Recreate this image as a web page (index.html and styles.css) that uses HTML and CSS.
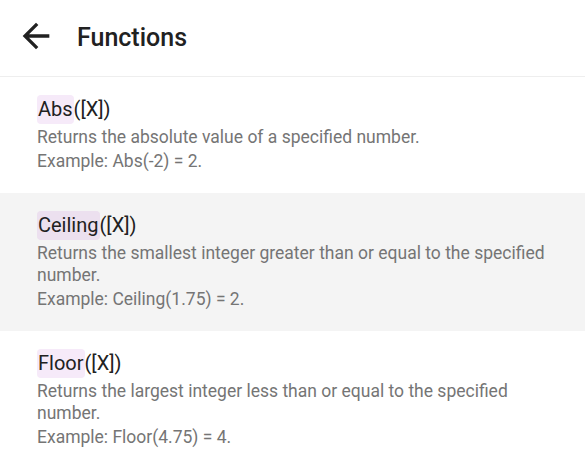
FILE: index.html
```html
<!DOCTYPE html>
<html lang="en">
<head>
<meta charset="utf-8">
<title>Functions</title>
<link rel="stylesheet" href="styles.css">
</head>
<body>
<header class="topbar">
  <svg class="back" viewBox="0 0 24 24" width="40" height="40" aria-hidden="true">
    <path d="M20 11H7.83l5.59-5.59L12 4l-8 8 8 8 1.41-1.41L7.83 13H20v-2z" fill="#212121"/>
  </svg>
  <h1 class="title">Functions</h1>
</header>
<main class="list">
  <section class="item">
    <div class="sig"><span class="fname">Abs</span>([X])</div>
    <p class="desc">Returns the absolute value of a specified number.</p>
    <p class="example">Example: Abs(-2) = 2.</p>
  </section>
  <section class="item item-active">
    <div class="sig"><span class="fname">Ceiling</span>([X])</div>
    <p class="desc">Returns the smallest integer greater than or equal to the specified number.</p>
    <p class="example">Example: Ceiling(1.75) = 2.</p>
  </section>
  <section class="item">
    <div class="sig"><span class="fname">Floor</span>([X])</div>
    <p class="desc">Returns the largest integer less than or equal to the specified number.</p>
    <p class="example">Example: Floor(4.75) = 4.</p>
  </section>
</main>
</body>
</html>
```
FILE: styles.css
```css
html, body {
  margin: 0;
  padding: 0;
  background: #ffffff;
  font-family: Roboto, "Noto Sans", sans-serif;
}

.topbar {
  height: 77px;
  box-sizing: border-box;
  padding: 0 0 4px 16px;
  display: flex;
  align-items: center;
  gap: 21px;
  border-bottom: 1px solid #eeeeee;
}

.back {
  display: block;
  flex: none;
}

.title {
  margin: 4px 0 0;
  font-size: 25px;
  font-weight: 500;
  color: #212121;
  line-height: 28px;
}

.item {
  padding: 18px 20px 21px 37px;
}

.item-active {
  background: #f4f4f4;
}

.sig {
  font-size: 20px;
  line-height: 29px;
  color: #212121;
}

.fname {
  display: inline-block;
  background: rgba(170, 50, 200, 0.1);
  border-radius: 4px;
  padding: 0 1px;
}

.desc,
.example {
  margin: 0;
  font-size: 17.5px;
  line-height: 22px;
  color: #757575;
}

.desc {
  margin-top: 2px;
}

.example {
  margin-top: 2px;
}
```
